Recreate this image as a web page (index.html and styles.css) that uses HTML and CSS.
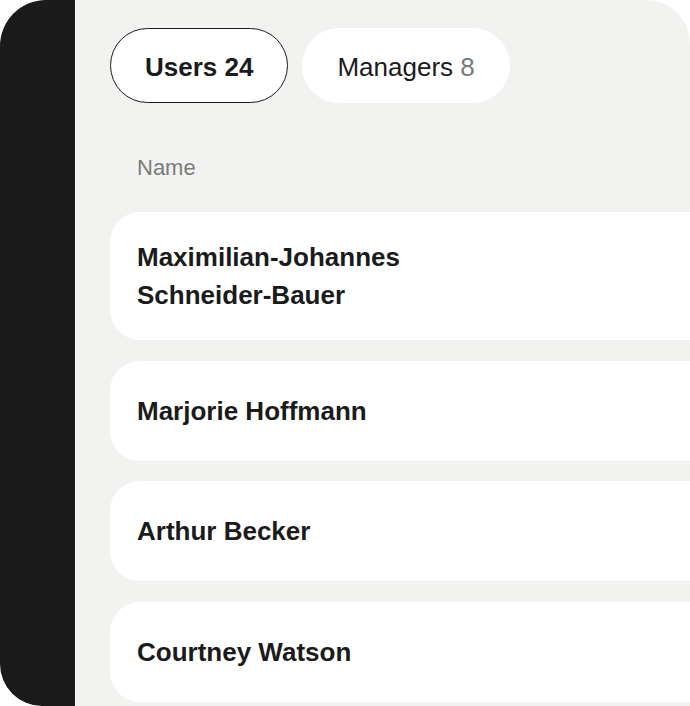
FILE: index.html
```html
<!DOCTYPE html>
<html lang="en">
<head>
<meta charset="utf-8">
<title>Users</title>
<link rel="stylesheet" href="styles.css">
</head>
<body>
<div class="frame">
  <aside class="sidebar"></aside>
  <main class="panel">
    <nav class="tabs">
      <button class="tab tab-active">Users 24</button>
      <button class="tab">Managers <span class="count">8</span></button>
    </nav>
    <div class="col-head">Name</div>
    <ul class="rows">
      <li class="row"><span class="name">Maximilian-Johannes Schneider-Bauer</span></li>
      <li class="row"><span class="name">Marjorie Hoffmann</span></li>
      <li class="row"><span class="name">Arthur Becker</span></li>
      <li class="row"><span class="name">Courtney Watson</span></li>
    </ul>
  </main>
</div>
</body>
</html>
```

FILE: styles.css
```css
html, body {
  margin: 0;
  padding: 0;
  background: #ffffff;
}

body {
  font-family: "Liberation Sans", Arial, sans-serif;
  color: #1b1b1b;
}

.frame {
  display: flex;
  width: 690px;
  height: 706px;
  overflow: hidden;
}

.sidebar {
  width: 75px;
  flex: none;
  background: #1a1a1a;
  border-radius: 46px 0 0 42px;
  margin-right: 1px;
}

.panel {
  flex: 1;
  background: #f2f3f1;
  border-top-right-radius: 44px;
  padding: 28px 0 0 34px;
  overflow: hidden;
}

.tabs {
  display: flex;
  gap: 14px;
}

.tab {
  height: 75px;
  padding: 3px 34px 0;
  border: 1.5px solid transparent;
  border-radius: 38px;
  background: #ffffff;
  font-family: inherit;
  font-size: 26px;
  font-weight: 400;
  color: #1b1b1b;
  cursor: pointer;
}

.tab-active {
  border-color: #1b1b1b;
  font-weight: 700;
}

.count {
  color: #7a7a7a;
}

.col-head {
  margin: 52px 0 0 27px;
  font-size: 22px;
  line-height: 26px;
  color: #7b7b7b;
}

.rows {
  list-style: none;
  margin: 31px 0 0 0;
  padding: 0;
  display: flex;
  flex-direction: column;
  gap: 20.5px;
}

.row {
  display: flex;
  align-items: center;
  box-sizing: border-box;
  min-height: 100px;
  padding: 26px 27px;
  background: #ffffff;
  border-radius: 30px 0 0 30px;
}

.name {
  width: 300px;
  font-size: 26px;
  font-weight: 700;
  line-height: 38px;
  color: #1b1b1b;
}
```
